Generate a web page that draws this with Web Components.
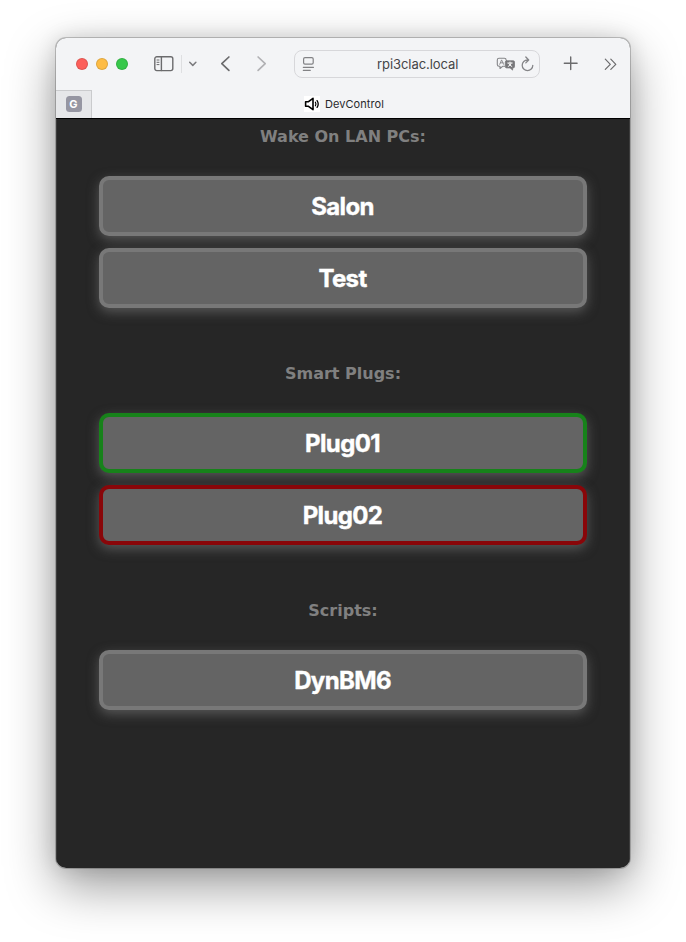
<!DOCTYPE html>
<html lang="en"><head><meta charset="utf-8"><title>DevControl</title>
<style>html,body{margin:0;background:#fff}body{width:686px;height:942px;overflow:hidden}</style></head>
<body>
<browser-window>
  <browser-toolbar slot="bar" address="rpi3clac.local"></browser-toolbar>
  <tab-strip slot="bar" pinned="G">DevControl</tab-strip>
  <device-group label="Wake On LAN PCs:"><device-button>Salon</device-button><device-button>Test</device-button></device-group>
  <device-group label="Smart Plugs:"><device-button state="on">Plug01</device-button><device-button state="off">Plug02</device-button></device-group>
  <device-group label="Scripts:"><device-button>DynBM6</device-button></device-group>
</browser-window>
<script>
const define = (name, html, setup) => customElements.define(name, class extends HTMLElement {
  connectedCallback() {
    if (this.shadowRoot) return;
    this.attachShadow({mode: 'open'}).innerHTML = html;
    if (setup) setup(this, this.shadowRoot);
  }
});

define('browser-window', `<style>
:host{display:block;box-sizing:border-box;width:686px;height:942px;padding:38px 56px 74px}
.frame{height:830px;border-radius:10px;box-shadow:0 0 0 1px rgba(0,0,0,.2),0 18px 50px rgba(0,0,0,.4),0 0 20px rgba(0,0,0,.12)}
.clip{height:100%;border-radius:10px;overflow:hidden;background:#262626;display:flex;flex-direction:column}
.page{flex:1;border-top:1px solid #000;box-shadow:inset 1px 0 #3c3c3c,inset -1px 0 #3c3c3c;display:flex;flex-direction:column;align-items:center}
</style><div class="frame"><div class="clip"><slot name="bar"></slot><div class="page"><slot></slot></div></div></div>`);

define('browser-toolbar', `<style>
:host{display:flex;align-items:center;height:52px;background:#f3f4f6;box-sizing:border-box;padding-left:20px;font-family:Inter,"Liberation Sans",sans-serif}
svg{display:block;flex:none;fill:none;stroke:#6b6b6d;stroke-linecap:round;stroke-linejoin:round}
.dot{width:12px;height:12px;box-sizing:border-box;border-radius:50%;margin-right:8px;flex:none;border:1px solid rgba(0,0,0,.12)}
.r{background:#fc5f5a}.y{background:#fdbc45}.g{background:#37c84b}
.side{margin-left:18px}
.rule{width:1px;height:18px;background:#dedfe1;margin:0 6px 0 7px}
.back{margin-left:22px}.fwd{margin-left:25px}
.field{box-sizing:border-box;width:246px;height:28px;border:1px solid #d7d7da;border-radius:8px;margin-left:27px;display:flex;align-items:center;padding:0 4px 0 7px;flex:none}
.addr{flex:1;font-size:13px;line-height:26px;color:#454547;text-align:left;padding-left:62px;letter-spacing:-.06px;white-space:nowrap}
</style>
<i class="dot r"></i><i class="dot y"></i><i class="dot g"></i>
<svg class="side" width="20" height="16" viewBox="0 0 20 16" stroke-width="1.4"><rect x=".8" y=".8" width="18" height="13.8" rx="2"/><path d="M7.4 1v13.5"/><path d="M3 4h2M3 6.3h2M3 8.6h2" stroke-width="1"/></svg>
<span class="rule"></span>
<svg width="10" height="8" viewBox="0 0 10 8" stroke-width="1.5" style="stroke:#7b7b7e"><path d="M1.7 2.3 4.8 5.4 7.9 2.3"/></svg>
<svg class="back" width="11" height="18" viewBox="0 0 11 18" stroke-width="1.7"><path d="M8.9 2 1.8 8.700l7.100 6.700"/></svg>
<svg class="fwd" width="11" height="18" viewBox="0 0 11 18" stroke-width="1.7" style="stroke:#b1b1b4"><path d="M2.1 2 9.2 8.700l-7.100 6.700"/></svg>
<div class="field">
<svg width="13" height="16" viewBox="0 0 13 16" stroke-width="1.2" style="stroke:#828285"><rect x="1.6" y="1.7" width="9.6" height="6.4" rx="1.4"/><path d="M1.3 11.3h10.2M1.3 14.3h7"/></svg>
<span class="addr"></span>
<svg width="20" height="16" viewBox="0 0 20 16" stroke-width="1.1" style="stroke:#858588"><path d="M8.5 10.3H6.6L4 12.5V10.3H3Q1.3 10.3 1.3 8.6V4Q1.3 2.3 3 2.3H8.4Q10.1 2.3 10.1 4"/><path d="M3.7 8.3 5.6 3.9 7.6 8.3M4.5 6.8H7" stroke-width=".9"/><path d="M10.6 4.8h6.6q1.3 0 1.3 1.3v4.5q0 1.3-1.3 1.3h-.6v2.2l-2.5-2.2h-3.5q-1.3 0-1.3-1.3V6.100q0-1.300 1.300-1.300Z" fill="#77777a" style="stroke:#77777a" stroke-width=".8"/><path d="M11.700 7h4.600M14 6v1M12.200 10.500q2.700-1 3-3.300M12.800 7.500q.7 2 3 3" style="stroke:#fff" stroke-width=".9"/></svg>
<svg width="15" height="18" viewBox="0 0 15 18" stroke-width="1.3" style="stroke:#858588;margin-left:4px"><path d="M7.500 5A5.300 5.300 0 1 0 12.800 10.300M5.800 2 8.700 5 5.800 7.900"/></svg>
</div>
<svg style="margin-left:23px" width="16" height="16" viewBox="0 0 16 16" stroke-width="1.4"><path d="M7.700 1v12.600M1.300 7.300h12.800"/></svg>
<svg style="margin-left:24px" width="16" height="14" viewBox="0 0 16 14" stroke-width="1.2"><path d="M2.300 2.200 7.300 7.300l-5 5.100M7.800 2.200l5 5.100-5 5.100"/></svg>`,
(el, root) => root.querySelector('.addr').textContent = el.getAttribute('address'));

define('tab-strip', `<style>
:host{display:flex;height:28px;background:#f3f4f6;font-family:Inter,"Liberation Sans",sans-serif}
.pin{box-sizing:border-box;width:36px;height:28px;flex:none;background:#e6e7e9;border-top:1px solid #cacbcd;border-right:1px solid #cacbcd;display:flex;align-items:center;justify-content:center}
.badge{width:16px;height:16px;margin-top:-1px;border-radius:3.5px;background:#9696a2;color:#fff;font:700 11px/17px Inter,sans-serif;text-align:center}
.tab{flex:1;display:flex;align-items:center;padding-left:212px;font-size:11px;color:#29292b;letter-spacing:.06px}
svg{display:block;background:#fff;margin-right:5px}
</style><div class="pin"><span class="badge"></span></div>
<div class="tab"><svg width="16" height="16" viewBox="0 0 16 16" fill="none" stroke="#000" stroke-width="1.6" stroke-linejoin="round" stroke-linecap="round"><path d="M1.600 5.700H4.500L9 2.300V13.700L4.500 10.300H1.600Z"/><path d="M11.400 6.200q1.100 1.800 0 3.600" stroke-width="1.2"/><path d="M13.100 4.600q2.200 3.400 0 6.800" stroke-width="1.300"/></svg><slot></slot></div>`,
(el, root) => root.querySelector('.badge').textContent = el.getAttribute('pinned'));

define('device-group', `<style>
:host{display:flex;flex-direction:column;align-items:center;width:488px;margin-bottom:48px}
h2{margin:0 0 27px;padding-top:6px;height:24px;font:700 16px/24px "DejaVu Sans",sans-serif;color:#808080;white-space:nowrap}
.list{display:flex;flex-direction:column;gap:12px;width:100%}
</style><h2></h2><div class="list"><slot></slot></div>`,
(el, root) => root.querySelector('h2').textContent = el.getAttribute('label'));

define('device-button', `<style>
:host{display:block;--edge:#787878}
:host([state=on]){--edge:#17821a}
:host([state=off]){--edge:#890609}
button{display:block;box-sizing:border-box;width:100%;height:60px;margin:0;padding:2px 1px 0 0;border:4px solid var(--edge);border-radius:10px;background:#646464;color:#fff;font:700 24px/50px Inter,"Liberation Sans",sans-serif;letter-spacing:-.65px;-webkit-text-stroke:.4px #fff;box-shadow:0 4px 12px rgba(128,128,128,.55)}
</style><button><slot></slot></button>`);
</script>
</body></html>
